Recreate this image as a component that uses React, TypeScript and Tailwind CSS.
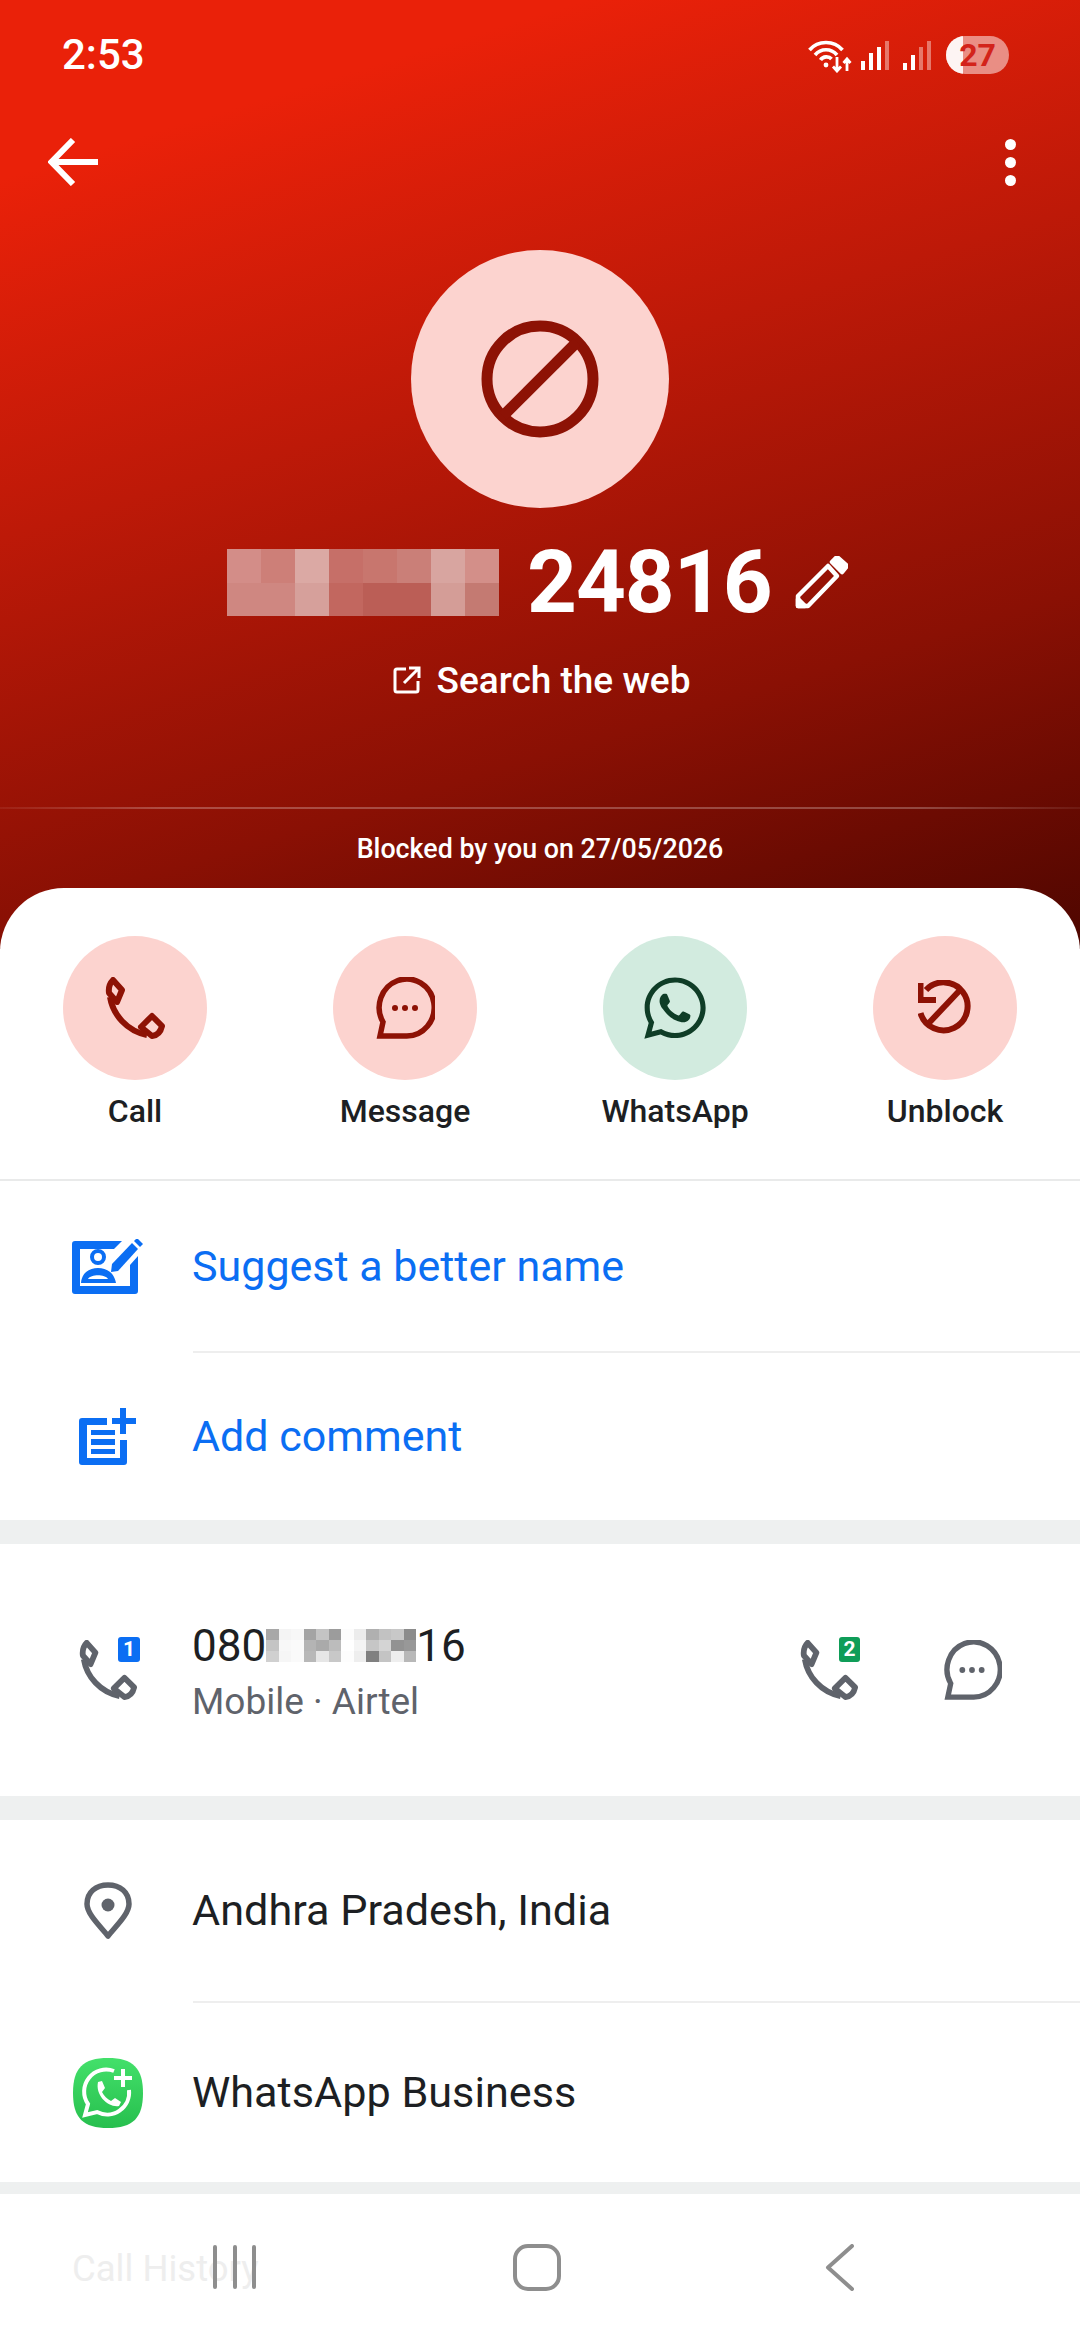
import { FaWhatsapp } from 'react-icons/fa';

const nameCells = [
  'bg-[#d38d88]', 'bg-[#cd7f78]', 'bg-[#dba9a4]', 'bg-[#c66f68]', 'bg-[#c8766e]', 'bg-[#ca7f78]', 'bg-[#d8a5a0]', 'bg-[#d38f89]',
  'bg-[#cf8781]', 'bg-[#cf8781]', 'bg-[#d6a09b]', 'bg-[#c2675f]', 'bg-[#bb5e56]', 'bg-[#bb5e56]', 'bg-[#d49d97]', 'bg-[#c47a72]',
];

const numberCells = [
  'bg-[#a8a8a8]', 'bg-[#f4f4f4]', 'bg-[#f7f7f7]', 'bg-[#a4a4a4]', 'bg-[#c4c4c4]', 'bg-[#9c9c9c]', 'bg-[#fcfcfc]', 'bg-[#ececec]', 'bg-[#b0b0b0]', 'bg-[#c2c2c2]', 'bg-[#c8c8c8]', 'bg-[#8c8c8c]',
  'bg-[#c4c4c4]', 'bg-[#f8f8f8]', 'bg-[#fafafa]', 'bg-[#b4b4b4]', 'bg-[#aaaaaa]', 'bg-[#bcbcbc]', 'bg-[#ffffff]', 'bg-[#f4f4f4]', 'bg-[#c6c6c6]', 'bg-[#d4d4d4]', 'bg-[#929292]', 'bg-[#989898]',
  'bg-[#d0d0d0]', 'bg-[#f6f6f6]', 'bg-[#fafafa]', 'bg-[#b8b8b8]', 'bg-[#e6e6e6]', 'bg-[#c8c8c8]', 'bg-[#fdfdfd]', 'bg-[#eeeeee]', 'bg-[#808080]', 'bg-[#c4c4c4]', 'bg-[#eeeeee]', 'bg-[#b8b8b8]',
];

function PhoneIcon({ className }: { className: string }) {
  return (
    <svg viewBox="0 0 60 62" className={className} fill="none" stroke="currentColor" strokeWidth="6" strokeLinejoin="round">
      <path d="M8 3 L17 13 L12 25 L4 16 Q3 8 8 3 Z" />
      <path d="M47 39 L57 49 Q55 58 47 59 L36 50 Z" />
      <path d="M5 20 C8 38 22 54 42 58" />
    </svg>
  );
}

function BubbleIcon({ className }: { className: string }) {
  return (
    <svg viewBox="0 0 60 62" className={className} fill="none">
      <path d="M8 45 A27.5 28.5 0 1 1 31 59 L5 59 Z" stroke="currentColor" strokeWidth="5.5" strokeLinejoin="miter" />
      <circle cx="20" cy="31" r="3" fill="currentColor" />
      <circle cx="30" cy="31" r="3" fill="currentColor" />
      <circle cx="40" cy="31" r="3" fill="currentColor" />
    </svg>
  );
}

function UnblockIcon({ className }: { className: string }) {
  return (
    <svg viewBox="0 0 54 56" className={className} fill="none" stroke="currentColor" strokeWidth="6">
      <path d="M8 10 A24 24 0 1 1 2.5 33" />
      <path d="M43 9 L9 45" />
      <path d="M2.5 3 V20 H18" />
    </svg>
  );
}

function SuggestIcon() {
  return (
    <svg viewBox="0 0 71 55" className="h-[55px] w-[71px] text-[#0b6ef3]">
      <path d="M50 2 H3 Q0 2 0 5 V52 Q0 55 3 55 H63 Q66 55 66 52 V17 L58 26 V47 H8 V10 H42 Z" fill="currentColor" />
      <circle cx="26" cy="18" r="6" fill="none" stroke="currentColor" strokeWidth="4" />
      <path d="M9 44 C10 33 18 29 26 29 C34 29 42 33 44 44 Z M16 40 H36 C33 35 19 35 16 40 Z" fill="currentColor" fillRule="evenodd" />
      <path d="M40 25 L60 4 L66 10 L46 32 L39 33 Z" fill="currentColor" />
      <path d="M62 2 L65 -1 L71 5 L68 8 Z" fill="currentColor" />
    </svg>
  );
}

function CommentIcon() {
  return (
    <svg viewBox="0 0 57 57" className="h-[57px] w-[57px] text-[#0b6ef3]">
      <path d="M3 10 H28 V17 H8 V50 H41 V32 H48 V54 Q48 57 45 57 H3 Q0 57 0 54 V13 Q0 10 3 10 Z" fill="currentColor" />
      <path d="M12 22 H36 V27 H12 Z M12 31 H36 V37 H12 Z M12 41 H36 V46 H12 Z" fill="currentColor" />
      <path d="M41 0 H47 V10 H57 V16 H47 V26 H41 V16 H33 V10 H41 Z" fill="currentColor" />
    </svg>
  );
}

function BusinessIcon() {
  return (
    <svg viewBox="0 0 70 70" className="h-[70px] w-[70px]">
      <defs>
        <linearGradient id="wab" x1="0" y1="0" x2="0" y2="1">
          <stop offset="0" stopColor="#43e06a" />
          <stop offset="1" stopColor="#27bf4e" />
        </linearGradient>
      </defs>
      <path d="M35 0 C60 0 70 10 70 35 C70 60 60 70 35 70 C10 70 0 60 0 35 C0 10 10 0 35 0 Z" fill="url(#wab)" />
      <path d="M41 13 A22 22 0 0 0 15 46 L12 57 L24 54 A22 22 0 0 0 56 32" fill="none" stroke="#fff" strokeWidth="4" />
      <path d="M25 24 L29 23 L32 30 L29 34 C31 38 34 41 38 43 L42 40 L48 44 L46 48 C36 50 22 38 25 24 Z" fill="#fff" />
      <path d="M48 11 H52 V18 H59 V22 H52 V29 H48 V22 H41 V18 H48 Z" fill="#fff" />
    </svg>
  );
}

function StatusIcons() {
  return (
    <div className="flex items-center">
      <svg viewBox="0 0 44 35" className="h-[35px] w-[44px] text-white" fill="none" stroke="currentColor" strokeWidth="3.6">
        <path d="M1.5 12 C10 2 26 2 34.5 12" />
        <path d="M7 17 C13 10 23 10 29 17" />
        <path d="M12.5 22 C15 18 21 18 23.5 21" />
        <circle cx="18" cy="27" r="2.4" fill="currentColor" stroke="none" />
        <path d="M29 19 V33 M25 28.5 L29 33 L33 28.5" strokeWidth="2.8" />
        <path d="M39 33 V21 M35.5 25 L39 21 L42.5 25" strokeWidth="2.8" />
      </svg>
      <div className="ml-[9px] flex h-[29px] items-end gap-[4px]">
        <div className="h-[9px] w-[4px] bg-white" />
        <div className="h-[17px] w-[4px] bg-white" />
        <div className="h-[23px] w-[4px] bg-white" />
        <div className="h-[29px] w-[4px] bg-white/40" />
      </div>
      <div className="ml-[14px] flex h-[29px] items-end gap-[4px]">
        <div className="h-[7px] w-[4px] bg-white" />
        <div className="h-[15px] w-[4px] bg-white" />
        <div className="h-[23px] w-[4px] bg-white/40" />
        <div className="h-[29px] w-[4px] bg-white/40" />
      </div>
      <div className="relative ml-[15px] flex h-[38px] w-[63px] items-center justify-center overflow-hidden rounded-full bg-white/50">
        <div className="absolute inset-y-0 left-0 w-[17px] bg-white/90" />
        <span className="relative text-[32px] font-bold leading-none text-[#d3231a]">27</span>
      </div>
    </div>
  );
}

function Action({ label, icon, tint }: { label: string; icon: React.ReactNode; tint: string }) {
  return (
    <div className="flex flex-col items-center">
      <div className={`flex h-[144px] w-[144px] items-center justify-center rounded-full ${tint}`}>{icon}</div>
      <span className="mt-[13px] text-[32px] font-medium leading-[36px] text-[#1d1f23]">{label}</span>
    </div>
  );
}

function Row({ icon, children, className }: { icon: React.ReactNode; children: React.ReactNode; className: string }) {
  return (
    <div className={`flex items-center pl-[72px] ${className}`}>
      <div className="flex w-[71px] justify-center">{icon}</div>
      <div className="ml-[49px]">{children}</div>
    </div>
  );
}

export default function App() {
  return (
    <div className="flex h-[2340px] w-[1080px] flex-col overflow-hidden bg-white font-['Roboto',sans-serif]">
      <div className="h-[950px] bg-[linear-gradient(163deg,#ea2109_14%,#bd1908_42%,#8a1004_72%,#4e0600_100%)] text-white">
        <div className="flex h-[110px] items-center justify-between pl-[62px] pr-[71px]">
          <span className="text-[42px] font-medium leading-none">2:53</span>
          <StatusIcons />
        </div>
        <div className="flex h-[104px] items-center justify-between pl-[48px] pr-[64px]">
          <svg viewBox="0 0 50 48" className="h-[48px] w-[50px]" fill="none" stroke="currentColor" strokeWidth="6">
            <path d="M50 24 H4 M25 2 L3.5 24 L25 46" />
          </svg>
          <div className="flex flex-col gap-[7px]">
            <div className="h-[11px] w-[11px] rounded-full bg-white" />
            <div className="h-[11px] w-[11px] rounded-full bg-white" />
            <div className="h-[11px] w-[11px] rounded-full bg-white" />
          </div>
        </div>
        <div className="mx-auto mt-[36px] flex h-[258px] w-[258px] items-center justify-center rounded-full bg-[#fcd3cf]">
          <svg viewBox="0 0 118 118" className="h-[118px] w-[118px] text-[#8d1205]" fill="none" stroke="currentColor" strokeWidth="11">
            <circle cx="59" cy="59" r="53" />
            <path d="M22 96 L96 22" />
          </svg>
        </div>
        <div className="mt-[41px] flex h-[67px] items-center pl-[227px]">
          <div className="grid h-[67px] w-[272px] grid-cols-8 grid-rows-2">
            {nameCells.map((c, i) => (
              <div key={i} className={c} />
            ))}
          </div>
          <span className="ml-[28px] text-[87px] font-bold leading-none tracking-[-1px]">24816</span>
          <svg viewBox="0 0 54 54" className="ml-[22px] h-[54px] w-[54px]" fill="none" stroke="currentColor" strokeWidth="4.5" strokeLinejoin="round">
            <path d="M4 40 L34 10 L43 20 L14 50 H4 Z" />
            <path d="M4 43 L11 50 H4 Z" fill="currentColor" />
            <path d="M38 6 L43 1 L53 10 L48 16 Z" fill="currentColor" />
          </svg>
        </div>
        <div className="mt-[44px] flex h-[40px] items-center justify-center pl-[3px]">
          <svg viewBox="0 0 28 28" className="h-[28px] w-[28px]" fill="none" stroke="currentColor" strokeWidth="3">
            <path d="M13 3 H4 Q2 3 2 5 V24 Q2 26 4 26 H23 Q25 26 25 24 V15" />
            <path d="M11 17 L26 2 M16 2 H26 V12" />
          </svg>
          <span className="ml-[16px] text-[37px] font-medium leading-none">Search the web</span>
        </div>
        <div className="mt-[107px] h-[2px] bg-[linear-gradient(90deg,#ffffff10,#ffffff40_15%,#ffffff40_85%,#ffffff10)]" />
        <div className="mt-[25px] text-center text-[26.8px] font-medium leading-[30px]">Blocked by you on 27/05/2026</div>
      </div>

      <div className="-mt-[61px] flex-1 rounded-t-[64px] bg-white">
        <div className="grid grid-cols-4 border-b-2 border-[#e9eaea] pb-[50px] pt-[48px]">
          <Action label="Call" tint="bg-[#fcd3cf]" icon={<PhoneIcon className="h-[62px] w-[60px] text-[#8d1205]" />} />
          <Action label="Message" tint="bg-[#fcd3cf]" icon={<BubbleIcon className="h-[62px] w-[60px] text-[#8d1205]" />} />
          <Action label="WhatsApp" tint="bg-[#d2ebdf]" icon={<FaWhatsapp className="h-[70px] w-[70px] text-[#0f3d27]" />} />
          <Action label="Unblock" tint="bg-[#fcd3cf]" icon={<UnblockIcon className="h-[56px] w-[54px] text-[#8d1205]" />} />
        </div>

        <Row className="h-[170px]" icon={<SuggestIcon />}>
          <span className="text-[43px] leading-none text-[#0b6ef3]">Suggest a better name</span>
        </Row>
        <div className="ml-[193px] h-[2px] bg-[#eeeeee]" />
        <Row className="h-[167px]" icon={<CommentIcon />}>
          <span className="text-[43px] leading-none text-[#0b6ef3]">Add comment</span>
        </Row>
        <div className="h-[24px] bg-[#eef0f0]" />

        <div className="flex h-[252px] items-center pl-[72px] pr-[78px]">
          <div className="relative flex h-[60px] w-[71px] justify-start pl-[6px]">
            <PhoneIcon className="h-[60px] w-[60px] text-[#5f636b]" />
            <div className="absolute -top-[3px] left-[46px] flex h-[25px] w-[22px] items-center justify-center rounded-[3px] bg-[#0b6ef3] text-[21px] font-bold leading-none text-white">1</div>
          </div>
          <div className="ml-[49px] flex-1 pt-[5px]">
            <div className="flex h-[48px] items-center text-[44px] leading-none text-[#1d1f23]">
              <span>080</span>
              <div className="grid h-[33px] w-[150px] grid-cols-12 grid-rows-3">
                {numberCells.map((c, i) => (
                  <div key={i} className={c} />
                ))}
              </div>
              <span>16</span>
            </div>
            <div className="mt-[10px] text-[37px] leading-[44px] text-[#5f636b]">Mobile · Airtel</div>
          </div>
          <div className="relative mr-[83px] h-[60px] w-[60px]">
            <PhoneIcon className="h-[60px] w-[60px] text-[#5f636b]" />
            <div className="absolute -top-[3px] left-[40px] flex h-[25px] w-[21px] items-center justify-center rounded-[3px] bg-[#0f9d58] text-[21px] font-bold leading-none text-white">2</div>
          </div>
          <BubbleIcon className="h-[60px] w-[60px] text-[#5f636b]" />
        </div>
        <div className="h-[24px] bg-[#eef0f0]" />

        <Row
          className="h-[181px]"
          icon={
            <svg viewBox="0 0 48 58" className="h-[58px] w-[48px] text-[#5f636b]">
              <path d="M24 54 C16 44 3 32 3 22 C3 10 12 3 24 3 C36 3 45 10 45 22 C45 32 32 44 24 54 Z" fill="none" stroke="currentColor" strokeWidth="5.5" strokeLinejoin="round" />
              <circle cx="24" cy="23" r="6.5" fill="currentColor" />
            </svg>
          }
        >
          <span className="text-[43.2px] leading-none text-[#1d1f23]">Andhra Pradesh, India</span>
        </Row>
        <div className="ml-[193px] h-[2px] bg-[#eeeeee]" />
        <Row className="h-[179px]" icon={<BusinessIcon />}>
          <span className="text-[43.2px] leading-none text-[#1d1f23]">WhatsApp Business</span>
        </Row>
        <div className="h-[12px] bg-[#eef0f0]" />

        <div className="relative flex h-[146px] items-center">
          <span className="absolute left-[72px] top-[57px] text-[36.5px] leading-none text-[#eeeeee]">Call History</span>
          <div className="relative ml-[213px] flex h-[44px] w-[43px] justify-between">
            <div className="h-full w-[4px] rounded-full bg-[#8e8e8e]" />
            <div className="h-full w-[4px] rounded-full bg-[#8e8e8e]" />
            <div className="h-full w-[4px] rounded-full bg-[#8e8e8e]" />
          </div>
          <div className="relative ml-[257px] h-[47px] w-[48px] rounded-[15px] border-[4px] border-[#8e8e8e]" />
          <svg viewBox="0 0 29 47" className="relative ml-[264px] h-[47px] w-[29px] text-[#8e8e8e]" fill="none" stroke="currentColor" strokeWidth="4" strokeLinecap="round" strokeLinejoin="round">
            <path d="M27 2 L3 23.5 L27 45" />
          </svg>
        </div>
      </div>
    </div>
  );
}
